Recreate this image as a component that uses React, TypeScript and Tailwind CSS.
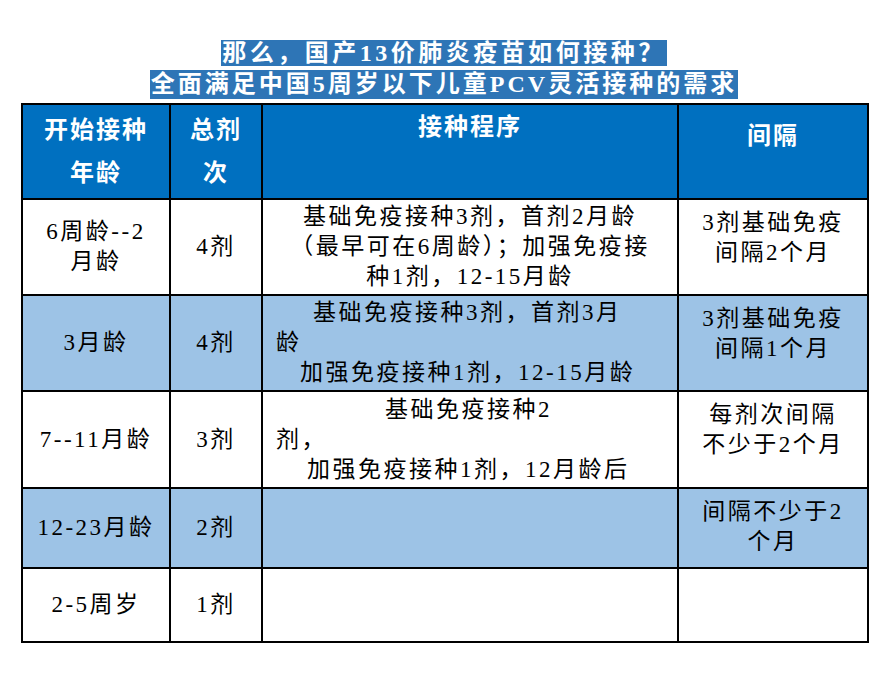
const font = { fontFamily: '"Liberation Serif", "Noto Sans CJK SC", serif' }

const rows = [
  { age: ['6周龄--2', '月龄'], dose: '4剂', plan: 'r1', gap: ['3剂基础免疫', '间隔2个月'], bg: 'bg-white', h: 'h-[96px]' },
  { age: ['3月龄'], dose: '4剂', plan: 'r2', gap: ['3剂基础免疫', '间隔1个月'], bg: 'bg-[#9dc3e6]', h: 'h-[96px]' },
  { age: ['7--11月龄'], dose: '3剂', plan: 'r3', gap: ['每剂次间隔', '不少于2个月'], bg: 'bg-white', h: 'h-[97px]' },
  { age: ['12-23月龄'], dose: '2剂', plan: '', gap: ['间隔不少于2', '个月'], bg: 'bg-[#9dc3e6]', h: 'h-[80px]' },
  { age: ['2-5周岁'], dose: '1剂', plan: '', gap: [], bg: 'bg-white', h: 'h-[74px]' },
]

function Plan({ id }: { id: string }) {
  if (id === 'r1') {
    return (
      <div className="text-center">
        <div>基础免疫接种3剂，首剂2月龄</div>
        <div>（最早可在6周龄）；加强免疫接</div>
        <div>种1剂，12-15月龄</div>
      </div>
    )
  }
  if (id === 'r2') {
    return (
      <div className="pl-[13px] text-left">
        <div className="pl-[37px]">基础免疫接种3剂，首剂3月</div>
        <div>龄</div>
        <div className="pl-[24px]">加强免疫接种1剂，12-15月龄</div>
      </div>
    )
  }
  if (id === 'r3') {
    return (
      <div className="pl-[13px] text-left">
        <div className="pl-[109px]">基础免疫接种2</div>
        <div>剂，</div>
        <div className="pl-[31px]">加强免疫接种1剂，12月龄后</div>
      </div>
    )
  }
  return null
}

export default function App() {
  return (
    <div className="min-h-[677px] w-[893px] bg-white pl-[21px] pt-[40px]" style={font}>
      {/* Title */}
      <div className="flex w-[846px] flex-col items-center gap-[4px] font-bold text-white">
        <span className="inline-block h-[26px] bg-[#2e75b6] px-[1px] text-[24px] leading-[26px] tracking-[3.5px]">
          那么，国产13价肺炎疫苗如何接种？
        </span>
        <span className="inline-block h-[29px] bg-[#2e75b6] px-[1px] text-[24px] leading-[29px] tracking-[3px]">
          全面满足中国5周岁以下儿童PCV灵活接种的需求
        </span>
      </div>

      {/* Table */}
      <table className="mt-[4px] w-[846px] table-fixed border-collapse text-[23px] leading-[30px] tracking-[2.5px] text-black">
        <colgroup>
          <col className="w-[148px]" />
          <col className="w-[92px]" />
          <col className="w-[416px]" />
          <col className="w-[190px]" />
        </colgroup>
        <thead>
          <tr className="h-[95px] bg-[#0070c0] text-[24px] font-bold leading-[43px] tracking-[2px] text-white">
            <th className="border-2 border-black p-0 align-middle">
              <div>开始接种</div>
              <div>年龄</div>
            </th>
            <th className="border-2 border-black p-0 align-middle">
              <div>总剂</div>
              <div>次</div>
            </th>
            <th className="border-2 border-black p-0 align-top">
              <div className="pt-[1px]">接种程序</div>
            </th>
            <th className="border-2 border-black p-0 align-top">
              <div className="pt-[10px]">间隔</div>
            </th>
          </tr>
        </thead>
        <tbody>
          {rows.map((r, i) => (
            <tr key={i} className={`${r.bg} ${r.h}`}>
              <td className="border-2 border-black p-0 text-center align-middle">
                {r.age.map((t) => (
                  <div key={t}>{t}</div>
                ))}
              </td>
              <td className="border-2 border-black p-0 text-center align-middle">{r.dose}</td>
              <td className="border-2 border-black p-0 align-middle">
                <Plan id={r.plan} />
              </td>
              <td className="border-2 border-black p-0 pt-[8px] text-center align-top">
                {r.gap.map((t) => (
                  <div key={t}>{t}</div>
                ))}
              </td>
            </tr>
          ))}
        </tbody>
      </table>
    </div>
  )
}
